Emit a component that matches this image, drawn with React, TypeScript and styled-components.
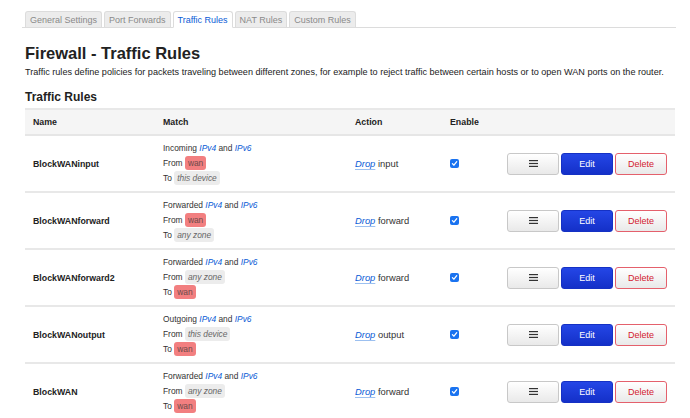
import React from 'react';
import styled, {createGlobalStyle} from 'styled-components';

type Zone = {label: string; any?: boolean};
type Rule = {
  name: string;
  kind: string;
  from: Zone;
  to: Zone;
  action: string;
};

const rules: Rule[] = [
  {name: 'BlockWANinput', kind: 'Incoming', from: {label: 'wan'}, to: {label: 'this device', any: true}, action: 'input'},
  {name: 'BlockWANforward', kind: 'Forwarded', from: {label: 'wan'}, to: {label: 'any zone', any: true}, action: 'forward'},
  {name: 'BlockWANforward2', kind: 'Forwarded', from: {label: 'any zone', any: true}, to: {label: 'wan'}, action: 'forward'},
  {name: 'BlockWANoutput', kind: 'Outgoing', from: {label: 'this device', any: true}, to: {label: 'wan'}, action: 'output'},
  {name: 'BlockWAN', kind: 'Forwarded', from: {label: 'any zone', any: true}, to: {label: 'wan'}, action: 'forward'},
];

const tabs = ['General Settings', 'Port Forwards', 'Traffic Rules', 'NAT Rules', 'Custom Rules'];

const App = () => {
  return (
    <>
      <GlobalStyle />
      <Page>
        <Tabs>
          {tabs.map((t) => (
            <Tab key={t} $active={t === 'Traffic Rules'}>
              {t}
            </Tab>
          ))}
        </Tabs>
        <Title>Firewall - Traffic Rules</Title>
        <Description>
          Traffic rules define policies for packets traveling between different zones, for example to reject traffic
          between certain hosts or to open WAN ports on the router.
        </Description>
        <SubTitle>Traffic Rules</SubTitle>
        <Table>
          <HeadRow>
            <HeadCell>Name</HeadCell>
            <HeadCell>Match</HeadCell>
            <HeadCell>Action</HeadCell>
            <HeadCell>Enable</HeadCell>
            <HeadCell />
          </HeadRow>
          {rules.map((r) => (
            <Row key={r.name}>
              <NameCell>{r.name}</NameCell>
              <MatchCell>
                <Line>
                  {r.kind} <Proto>IPv4</Proto> and <Proto>IPv6</Proto>
                </Line>
                <Line>
                  From <ZoneBadge $any={r.from.any}>{r.from.label}</ZoneBadge>
                </Line>
                <Line>
                  To <ZoneBadge $any={r.to.any}>{r.to.label}</ZoneBadge>
                </Line>
              </MatchCell>
              <ActionCell>
                <Verb>Drop</Verb> {r.action}
              </ActionCell>
              <EnableCell>
                <Check>
                  <svg width="7" height="7" viewBox="0 0 10 10">
                    <path d="M2 5.2 L4.2 7.4 L8.2 2.4" stroke="#fff" strokeWidth="1.8" fill="none" strokeLinecap="round" strokeLinejoin="round" />
                  </svg>
                </Check>
              </EnableCell>
              <ButtonCell>
                <Button $variant="plain">
                  <svg width="9" height="7" viewBox="0 0 9 7">
                    <rect x="0" y="0" width="9" height="1.2" fill="#333" />
                    <rect x="0" y="2.9" width="9" height="1.2" fill="#333" />
                    <rect x="0" y="5.8" width="9" height="1.2" fill="#333" />
                  </svg>
                </Button>
                <Button $variant="edit">Edit</Button>
                <Button $variant="delete">Delete</Button>
              </ButtonCell>
            </Row>
          ))}
        </Table>
      </Page>
    </>
  );
};

export default App;

const GlobalStyle = createGlobalStyle`
  body {
    margin: 0;
    background: #ffffff;
    font-family: "Liberation Sans", Arial, sans-serif;
    color: #333;
  }
`;

const Page = styled.div`
  padding: 10px 14px 0 22px;
`;

const Tabs = styled.div`
  display: flex;
  gap: 2px;
  padding-left: 3px;
  border-bottom: 1px solid #dcdcdc;
  height: 17px;
`;

const Tab = styled.div<{$active?: boolean}>`
  font-size: 9px;
  line-height: 16px;
  padding: 0 4px;
  border: 1px solid #dcdcdc;
  border-bottom: ${(p) => (p.$active ? '1px solid #fff' : 'none')};
  border-radius: 3px 3px 0 0;
  background: ${(p) => (p.$active ? '#fff' : '#ececec')};
  color: ${(p) => (p.$active ? '#0a5bd6' : '#8a8a8a')};
  height: ${(p) => (p.$active ? '17px' : '16px')};
  box-sizing: border-box;
  margin-top: 1px;
`;

const Title = styled.h1`
  margin: 15px 0 0 3px;
  font-size: 16.5px;
  line-height: 20px;
  font-weight: 700;
  color: #222;
`;

const Description = styled.p`
  margin: 3px 0 0 3px;
  font-size: 9.1px;
  line-height: 12px;
  color: #222;
`;

const SubTitle = styled.h3`
  margin: 11px 0 0 3px;
  font-size: 12px;
  line-height: 16px;
  font-weight: 700;
  color: #222;
`;

const Table = styled.div`
  margin: 3px 0 0 3px;
  width: 650px;
  border-top: 2px solid #e8e8e8;
`;

const HeadRow = styled.div`
  display: grid;
  grid-template-columns: 130px 192px 95px 58px 1fr;
  height: 24px;
  align-items: center;
  background: #f5f5f5;
  border-bottom: 2px solid #e6e6e6;
`;

const HeadCell = styled.div`
  padding-left: 8px;
  font-size: 8.8px;
  font-weight: 700;
  color: #222;
`;

const Row = styled.div`
  display: grid;
  grid-template-columns: 130px 192px 95px 58px 1fr;
  align-items: center;
  height: 55px;
  border-bottom: 2px solid #e8e8e8;
`;

const NameCell = styled.div`
  padding-left: 8px;
  font-size: 8.8px;
  font-weight: 700;
  color: #222;
`;

const MatchCell = styled.div`
  padding-left: 8px;
  display: flex;
  flex-direction: column;
  font-size: 8.4px;
  color: #333;
`;

const Line = styled.div`
  height: 15px;
  line-height: 15px;
  white-space: nowrap;
`;

const Proto = styled.span`
  color: #0a5bd6;
  font-style: italic;
`;

const ZoneBadge = styled.span<{$any?: boolean}>`
  display: inline-block;
  padding: 0 3px;
  line-height: 14px;
  border-radius: 3px;
  font-style: ${(p) => (p.$any ? 'italic' : 'normal')};
  background: ${(p) => (p.$any ? '#ececec' : '#f27f80')};
  color: ${(p) => (p.$any ? '#666' : '#6b4a4a')};
`;

const ActionCell = styled.div`
  padding-left: 8px;
  font-size: 9.4px;
  color: #333;
`;

const Verb = styled.span`
  color: #0a5bd6;
  font-style: italic;
  text-decoration: underline;
  text-decoration-color: #9cc0f0;
  text-underline-offset: 2px;
`;

const EnableCell = styled.div`
  padding-left: 8px;
  display: flex;
  align-items: center;
`;

const Check = styled.span`
  display: inline-flex;
  align-items: center;
  justify-content: center;
  width: 9px;
  height: 9px;
  border-radius: 2px;
  background: #1a73f0;
`;

const ButtonCell = styled.div`
  display: flex;
  justify-content: flex-end;
  gap: 2px;
  padding-right: 8px;
`;

const Button = styled.button<{$variant: 'plain' | 'edit' | 'delete'}>`
  width: 52px;
  height: 22px;
  box-sizing: border-box;
  border-radius: 3px;
  font-family: "Liberation Sans", Arial, sans-serif;
  font-size: 9px;
  display: flex;
  align-items: center;
  justify-content: center;
  padding: 0;
  cursor: pointer;
  border: 1px solid
    ${(p) => (p.$variant === 'edit' ? '#1531c4' : p.$variant === 'delete' ? '#e4606c' : '#c8c8c8')};
  background: ${(p) =>
    p.$variant === 'edit'
      ? 'linear-gradient(#2446e6, #1430c8)'
      : 'linear-gradient(#ffffff, #e9e9e9)'};
  color: ${(p) => (p.$variant === 'edit' ? '#fff' : p.$variant === 'delete' ? '#d3202f' : '#333')};
`;
